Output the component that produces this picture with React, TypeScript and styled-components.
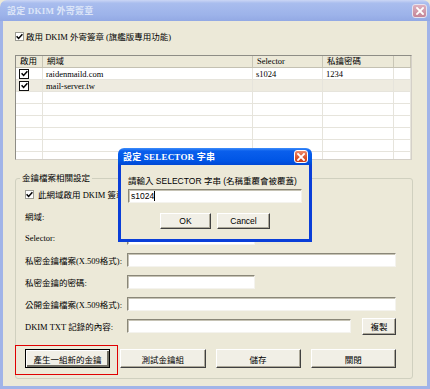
import styled, { createGlobalStyle } from 'styled-components';

const GlobalStyle = createGlobalStyle`
  html, body { margin: 0; padding: 0; background: #ECE9D8; }
  body {
    font-family: 'Liberation Serif', 'Noto Sans CJK TC', serif;
    font-size: 8.5px;
    color: #000;
  }
  * { box-sizing: border-box; }
`;

type Entry = { on: boolean; domain: string; selector: string; key: string };

const entries: Entry[] = [
  { on: true, domain: 'raidenmaild.com', selector: 's1024', key: '1234' },
  { on: true, domain: 'mail-server.tw', selector: '', key: '' },
];

const EMPTY_ROWS = 6;

const CheckMark = () => (
  <svg width="7" height="7" viewBox="0 0 7 7">
    <path d="M0.6 3.2 L2.6 5.4 L6.4 1.2" stroke="#000" strokeWidth="1.5" fill="none" />
  </svg>
);

const CloseGlyph = () => (
  <svg width="8" height="8" viewBox="0 0 8 8">
    <path d="M1 1 L7 7 M7 1 L1 7" stroke="#fff" strokeWidth="1.8" strokeLinecap="square" />
  </svg>
);

export default function App() {
  return (
    <>
      <GlobalStyle />
      <Window>
        <TitleBar>
          <TitleText $inactive>設定 DKIM 外寄簽章</TitleText>
          <CloseBox $inactive><CloseGlyph /></CloseBox>
        </TitleBar>
        <Frame>
          <CheckRow>
            <FlatBox><CheckMark /></FlatBox>
            <span>啟用 DKIM 外寄簽章 (旗艦版專用功能)</span>
          </CheckRow>

          <ListView>
            <HeaderRow>
              <HeadCell>啟用</HeadCell>
              <HeadCell>網域</HeadCell>
              <HeadCell>Selector</HeadCell>
              <HeadCell>私鑰密碼</HeadCell>
              <HeadCell />
            </HeaderRow>
            {entries.map((e, i) => (
              <DataRow key={e.domain} $shaded={i === 1}>
                <Cell $center>{e.on && <ListBox><CheckMark /></ListBox>}</Cell>
                <Cell>{e.domain}</Cell>
                <Cell>{e.selector}</Cell>
                <Cell>{e.key}</Cell>
                <Cell />
              </DataRow>
            ))}
            {Array.from({ length: EMPTY_ROWS }).map((_, i) => (
              <DataRow key={'empty' + i}>
                <Cell /><Cell /><Cell /><Cell /><Cell />
              </DataRow>
            ))}
          </ListView>

          <GroupBox>
            <Legend>金鑰檔案相關設定</Legend>
            <CheckRow $inner>
              <FlatBox><CheckMark /></FlatBox>
              <span>此網域啟用 DKIM 簽章</span>
            </CheckRow>
            <FormGrid>
              <Label>網域:</Label>
              <div />
              <Label>Selector:</Label>
              <TextBox $width={128} />
              <Label>私密金鑰檔案(X.509格式):</Label>
              <TextBox />
              <Label>私密金鑰的密碼:</Label>
              <TextBox $width={128} />
              <Label>公開金鑰檔案(X.509格式):</Label>
              <TextBox />
              <Label>DKIM TXT 記錄的內容:</Label>
              <FieldWithButton>
                <TextBox $width={224} />
                <SmallButton>複製</SmallButton>
              </FieldWithButton>
            </FormGrid>
            <ButtonRow>
              <PushButton $default $marked>產生一組新的金鑰</PushButton>
              <PushButton>測試金鑰組</PushButton>
              <PushButton>儲存</PushButton>
              <PushButton>關閉</PushButton>
            </ButtonRow>
          </GroupBox>
        </Frame>

        <Dialog>
          <DialogTitle>
            <TitleText>設定 SELECTOR 字串</TitleText>
            <CloseBox $small><CloseGlyph /></CloseBox>
          </DialogTitle>
          <DialogBody>
            <DialogLabel>請輸入 SELECTOR 字串 (名稱重覆會被覆蓋)</DialogLabel>
            <DialogInput>s1024<Caret /></DialogInput>
            <DialogButtons>
              <DialogButton $w={51}>OK</DialogButton>
              <DialogButton $w={53}>Cancel</DialogButton>
            </DialogButtons>
          </DialogBody>
        </Dialog>
      </Window>
    </>
  );
}

const Window = styled.div`
    position: relative;
    width: 430px;
    height: 389px;
    display: flex;
    flex-direction: column;
    overflow: hidden;
  `,
  TitleBar = styled.div`
    height: 21px;
    flex: 0 0 21px;
    display: flex;
    align-items: center;
    justify-content: space-between;
    padding: 0 3px 0 7px;
    border-radius: 7px 7px 0 0;
    background: linear-gradient(#CBD6F5 0%, #A9BDEE 15%, #9DB3EA 70%, #93A9E4 100%);
  `,
  TitleText = styled.span<{ $inactive?: boolean }>`
    font-weight: bold;
    font-size: 9px;
    letter-spacing: 0.2px;
    color: ${p => (p.$inactive ? '#DCE5F8' : '#fff')};
    white-space: nowrap;
  `,
  CloseBox = styled.div<{ $inactive?: boolean; $small?: boolean }>`
    width: ${p => (p.$small ? 14 : 15)}px;
    height: ${p => (p.$small ? 13 : 14)}px;
    display: flex;
    align-items: center;
    justify-content: center;
    border-radius: 3px;
    border: 1px solid ${p => (p.$inactive ? '#E6E3F0' : '#fff')};
    background: ${p => (p.$inactive
      ? 'linear-gradient(#DDB0BE, #C48698)'
      : 'linear-gradient(#EE8C6C, #D9532C 60%, #C8401C)')};
  `,
  Frame = styled.div`
    flex: 1;
    display: flex;
    flex-direction: column;
    background: #ECE9D8;
    border: 3px solid #A1B4E8;
    border-top: none;
    padding: 9px 14px 7px 12px;
  `,
  CheckRow = styled.div<{ $inner?: boolean }>`
    height: 12px;
    display: flex;
    align-items: center;
    gap: ${p => (p.$inner ? 4 : 2)}px;
    white-space: nowrap;
  `,
  FlatBox = styled.div`
    width: 9px;
    height: 9px;
    border: 1px solid #9C9C94;
    background: #fff;
    display: flex;
    align-items: center;
    justify-content: center;
  `,
  ListBox = styled.div`
    width: 10px;
    height: 10px;
    border: 1.5px solid #111;
    background: #fff;
    display: flex;
    align-items: center;
    justify-content: center;
  `,
  ListView = styled.div`
    margin-top: 13px;
    width: 397px;
    height: 105px;
    flex: 0 0 105px;
    background: #fff;
    border: 1px solid #8E8D86;
    border-right-color: #D4D0C8;
    border-bottom-color: #D4D0C8;
    overflow: hidden;
  `,
  HeaderRow = styled.div`
    display: grid;
    grid-template-columns: 27px 210px 70px 71px 1fr;
    height: 12px;
    background: #ECE9D8;
    border-bottom: 1px solid #C4C1B2;
  `,
  HeadCell = styled.div`
    padding-left: 4px;
    line-height: 11px;
    border-right: 1px solid #C9C6B6;
    white-space: nowrap;
  `,
  DataRow = styled.div<{ $shaded?: boolean }>`
    display: grid;
    grid-template-columns: 27px 210px 70px 71px 1fr;
    height: 12px;
    background: ${p => (p.$shaded ? '#EEEBE0' : '#fff')};
    border-bottom: 1px solid #E6E4DC;
  `,
  Cell = styled.div<{ $center?: boolean }>`
    display: flex;
    align-items: center;
    justify-content: ${p => (p.$center ? 'flex-start' : 'flex-start')};
    padding-left: ${p => (p.$center ? 3 : 3)}px;
    border-right: 1px solid #E6E4DC;
    white-space: nowrap;
  `,
  GroupBox = styled.div`
    position: relative;
    margin-top: 18px;
    width: 398px;
    flex: 1;
    display: flex;
    flex-direction: column;
    border: 1px solid #D0D0BF;
    border-radius: 3px;
    padding: 9px 16px 0 9px;
  `,
  Legend = styled.div`
    position: absolute;
    top: -7px;
    left: 4px;
    padding: 0 2px;
    line-height: 12px;
    background: #ECE9D8;
    white-space: nowrap;
  `,
  FormGrid = styled.div`
    margin-top: 5px;
    display: grid;
    grid-template-columns: 102px 1fr;
    grid-auto-rows: 22px;
    align-items: center;
  `,
  Label = styled.div`
    white-space: nowrap;
  `,
  TextBox = styled.div<{ $width?: number }>`
    width: ${p => (p.$width ? `${p.$width}px` : '100%')};
    height: 14px;
    background: #fff;
    border: 1px solid;
    border-color: #8A8778 #F4F3EE #F4F3EE #8A8778;
    box-shadow: inset 1px 1px 0 #C6C3B5;
  `,
  FieldWithButton = styled.div`
    display: flex;
    align-items: center;
    justify-content: space-between;
  `,
  SmallButton = styled.div`
    width: 34px;
    height: 17px;
    display: flex;
    align-items: center;
    justify-content: center;
    background: #F1EFE6;
    border: 1px solid;
    border-color: #fff #404040 #404040 #fff;
    box-shadow: inset -1px -1px 0 #ACA899;
    white-space: nowrap;
  `,
  ButtonRow = styled.div`
    margin-top: 12px;
    display: grid;
    grid-template-columns: repeat(4, 1fr);
    gap: 10px;
    height: 19px;
  `,
  PushButton = styled.div<{ $default?: boolean; $marked?: boolean }>`
    position: relative;
    display: flex;
    align-items: center;
    justify-content: center;
    background: #F1EFE6;
    border: 1px solid;
    border-color: ${p => (p.$default ? '#000' : '#fff #404040 #404040 #fff')};
    box-shadow: ${p => (p.$default
      ? 'inset 1px 1px 0 #fff, inset -2px -2px 0 #716F64'
      : 'inset -1px -1px 0 #ACA899')};
    white-space: nowrap;
    &::after {
      content: '';
      display: ${p => (p.$marked ? 'block' : 'none')};
      position: absolute;
      top: -5px;
      left: -11px;
      right: -9px;
      bottom: -8px;
      border: 1px solid #E00000;
    }
  `,
  Dialog = styled.div`
    position: absolute;
    left: 118px;
    top: 148px;
    width: 194px;
    height: 94px;
    display: flex;
    flex-direction: column;
  `,
  DialogTitle = styled.div`
    height: 17px;
    flex: 0 0 17px;
    display: flex;
    align-items: center;
    justify-content: space-between;
    padding: 0 4px 0 5px;
    border-radius: 6px 6px 0 0;
    background: linear-gradient(#3D8DFB 0%, #0A5FEC 18%, #0055E5 75%, #0048D4 100%);
  `,
  DialogBody = styled.div`
    flex: 1;
    display: flex;
    flex-direction: column;
    background: #ECE9D8;
    border: 3px solid #0A3ED8;
    border-top: none;
    padding: 10px 7px 0 7px;
    font-family: 'Liberation Sans', 'Noto Sans CJK TC', sans-serif;
  `,
  DialogLabel = styled.div`
    height: 12px;
    line-height: 12px;
    white-space: nowrap;
  `,
  DialogInput = styled.div`
    margin-top: 2px;
    height: 14px;
    display: flex;
    align-items: center;
    padding-left: 2px;
    background: #fff;
    border: 1px solid;
    border-color: #8A8778 #F4F3EE #F4F3EE #8A8778;
    box-shadow: inset 1px 1px 0 #C6C3B5;
  `,
  Caret = styled.span`
    display: inline-block;
    width: 1px;
    height: 10px;
    background: #000;
  `,
  DialogButtons = styled.div`
    margin-top: 10px;
    display: flex;
    justify-content: center;
    gap: 6px;
  `,
  DialogButton = styled.div<{ $w: number }>`
    width: ${p => p.$w}px;
    height: 16px;
    display: flex;
    align-items: center;
    justify-content: center;
    background: #F1EFE6;
    border: 1px solid;
    border-color: #fff #404040 #404040 #fff;
    box-shadow: inset -1px -1px 0 #ACA899;
  `;
